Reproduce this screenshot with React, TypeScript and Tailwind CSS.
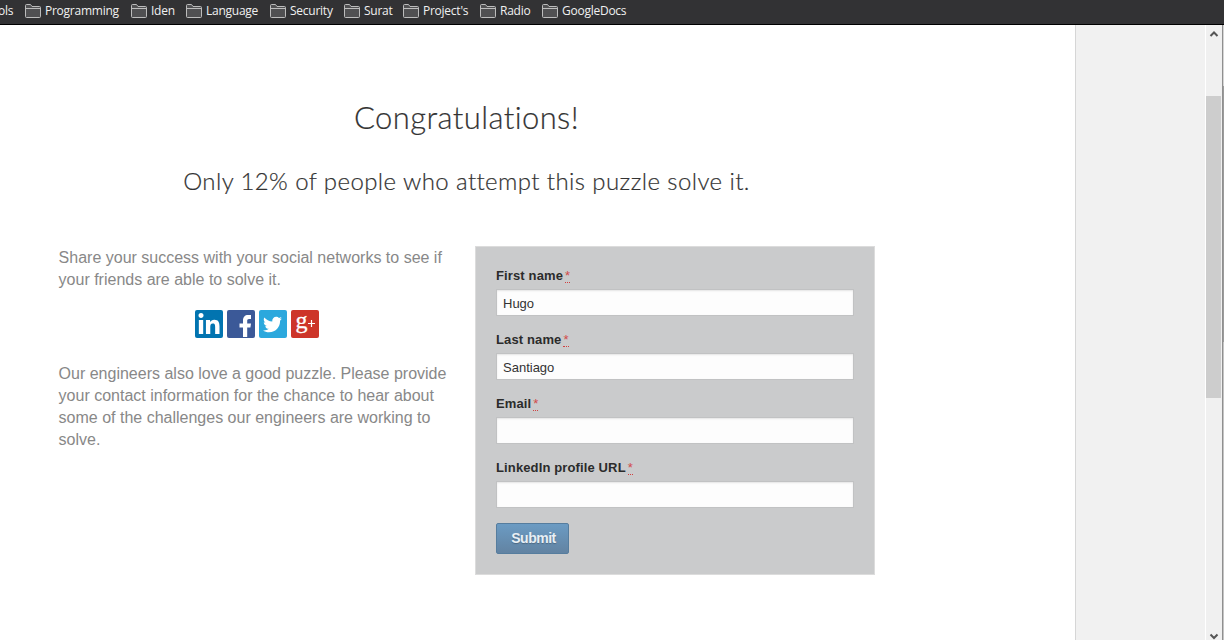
import { FaLinkedinIn, FaTwitter } from "react-icons/fa";

const bookmarks = [
  { name: "Programming", cls: "w-[106px]" },
  { name: "Iden", cls: "w-[55px]" },
  { name: "Language", cls: "w-[84px]" },
  { name: "Security", cls: "w-[74px]" },
  { name: "Surat", cls: "w-[59px]" },
  { name: "Project's", cls: "w-[77px]" },
  { name: "Radio", cls: "w-[62px]" },
  { name: "GoogleDocs", cls: "w-[100px]" },
];

function Folder() {
  return (
    <svg width="16" height="14" viewBox="0 0 16 14" className="mr-1 shrink-0" fill="none">
      <path d="M.5 1.5Q.5.5 1.5.5H5.5L7 2.5H14.5Q15.5 2.5 15.5 3.5V12.5Q15.5 13.5 14.5 13.5H1.5Q.5 13.5.5 12.5Z" fill="#505052" stroke="#bcbcbc" />
      <path d="M1 4.5H15" stroke="#bcbcbc" />
    </svg>
  );
}

function BookmarksBar() {
  return (
    <header className="flex h-[25px] w-full border-b border-black bg-[#323234] font-['Open_Sans',sans-serif] text-[12px] leading-[22px] tracking-[-0.25px] text-[#f0f0f0]">
      <div className="w-[25px] shrink-0">
        <span className="-ml-[2px]">ols</span>
      </div>
      {bookmarks.map((b) => (
        <div key={b.name} className={`flex h-[21px] shrink-0 items-center whitespace-nowrap ${b.cls}`}>
          <Folder />
          <span>{b.name}</span>
        </div>
      ))}
    </header>
  );
}

function Field({ label, value = "" }: { label: string; value?: string }) {
  return (
    <div className="h-16">
      <div className="flex h-[22px] items-start pt-px text-[13px] leading-[16px] font-bold text-[#2b2b2b]">
        <span className="tracking-[0.13px]">{label}</span>
        <span className="ml-[2px] h-[15px] border-b border-dotted border-[#d04040] font-normal text-[#d24a4a]">*</span>
      </div>
      <input
        aria-label={label}
        defaultValue={value}
        className="block h-[27px] w-[358px] border border-[#c1c2c3] bg-[#fdfdfd] px-[6px] pt-px text-[13px] text-[#333] shadow-[inset_0_1px_2px_rgba(0,0,0,0.1)] outline-none"
      />
    </div>
  );
}

function SocialLinks() {
  return (
    <div className="mt-[19px] ml-[136px] flex gap-1 text-white">
      <div className="flex size-7 items-center justify-center rounded-[2px] bg-[#0274b0] pt-[2px]">
        <FaLinkedinIn size={24} />
      </div>
      <div className="size-7 rounded-[2px] bg-[#3b5998]">
        <svg width="28" height="28" viewBox="0 0 28 28" fill="white">
          <path d="M16 27V17.5H12.5V13.5H16V10.5C16 7 18 5 21 5H24V9H22C20.8 9 20.2 9.7 20.2 10.8V13.5H24L23.4 17.5H20.2V27Z" />
        </svg>
      </div>
      <div className="flex size-7 items-center justify-center rounded-[2px] bg-[#2ba8dd]">
        <FaTwitter size={19} />
      </div>
      <div className="size-7 rounded-[2px] bg-[#cd3529]">
        <svg width="28" height="28" viewBox="0 0 28 28" className="overflow-visible">
          <text x="4.5" y="18" fill="white" stroke="white" strokeWidth=".3" fontFamily="Liberation Serif, serif" fontSize="24">g</text>
          <path d="M17 13.5H24M20.5 10V17" stroke="white" strokeWidth="1.2" />
        </svg>
      </div>
    </div>
  );
}

function Scrollbar() {
  return (
    <div className="flex w-[19px] shrink-0 border-l border-white">
      <div className="flex w-[16px] flex-col bg-[#f0f0f0]">
        <svg width="16" height="71" viewBox="0 0 16 71" fill="none">
          <path d="M4.5 11L8 7.5L11.5 11" stroke="#555" strokeWidth="2" />
        </svg>
        <div className="h-[302px] w-[15px] bg-[#cdcdcd]" />
        <svg width="16" height="242" viewBox="0 0 16 242" fill="none">
          <path d="M4.5 236.5L8 240L11.5 236.5" stroke="#555" strokeWidth="2" />
        </svg>
      </div>
      <div className="flex w-[2px] flex-col border-l border-[#8f8f8f]">
        <div className="h-[61px] bg-[#d5d5d5]" />
        <div className="h-[256px] bg-[#9b9b9b]" />
        <div className="grow bg-[#c4c4c4]" />
      </div>
    </div>
  );
}

export default function App() {
  return (
    <div className="flex h-[640px] w-[1224px] flex-col overflow-hidden bg-white font-['Liberation_Sans',Arial,sans-serif]">
      <BookmarksBar />
      <div className="flex h-[615px]">
        <main className="w-[1075px] shrink-0">
          <div className="w-[933px] text-center font-['Lato',sans-serif] font-light text-[#333] [-webkit-text-stroke:0.2px_#333]">
            <h1 className="pt-[72px] text-[31px] leading-[40px] tracking-[0.4px]">Congratulations!</h1>
            <h2 className="mt-[29px] text-[24px] leading-[30px] tracking-[0.41px]">Only 12% of people who attempt this puzzle solve it.</h2>
          </div>
          <div className="mt-[50px] flex pl-[58px]">
            <section className="w-[417px] pt-px pl-[0.6px] text-[16px] leading-[22px] text-[#888]">
              <p>Share your success with your social networks to see if<br />your friends are able to solve it.</p>
              <SocialLinks />
              <p className="mt-[25px]">Our engineers also love a good puzzle. Please provide<br />your contact information for the chance to hear about<br />some of the challenges our engineers are working to<br />solve.</p>
            </section>
            <form className="h-[329px] w-[400px] border border-[#dcdcdc] bg-[#cacbcc] pt-[20px] pl-[20px]" onSubmit={(e) => e.preventDefault()}>
              <Field label="First name" value="Hugo" />
              <Field label="Last name" value="Santiago" />
              <Field label="Email" />
              <Field label="LinkedIn profile URL" />
              <button className="h-[31px] w-[73px] rounded-[2px] border border-[#567d9e] bg-linear-to-b from-[#6b9bc3] to-[#6283a2] pl-[2px] text-[14px] font-bold tracking-[-0.5px] text-[#e8eff5] [text-shadow:0_1px_1px_rgba(0,0,0,0.25)]">Submit</button>
            </form>
          </div>
        </main>
        <aside className="w-[130px] shrink-0 border-l border-[#d6d6d6] bg-[#f1f1f1]" />
        <Scrollbar />
      </div>
    </div>
  );
}
